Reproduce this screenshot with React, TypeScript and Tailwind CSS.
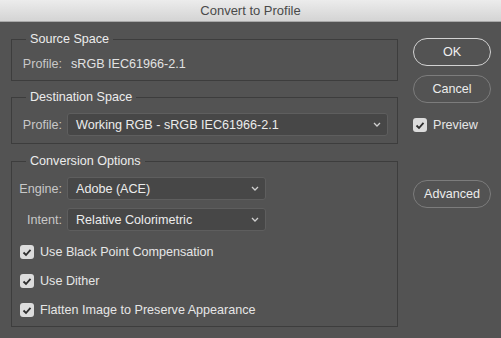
import React from "react";

const Chevron = () => (
  <svg width="8" height="5" viewBox="0 0 8 5" className="shrink-0">
    <polyline points="1,1 4,4 7,1" fill="none" stroke="#d0d0d0" strokeWidth="1.3" />
  </svg>
);

const Box = () => (
  <div className="w-[14px] h-[14px] rounded-[3px] bg-[#dcdcdc] flex items-center justify-center shrink-0">
    <svg width="10" height="9" viewBox="0 0 10 9">
      <polyline points="1.5,4.5 4,7 8.5,1.8" fill="none" stroke="#2e2e2e" strokeWidth="1.8" />
    </svg>
  </div>
);

const Check = ({ label }: { label: string }) => (
  <div className="flex items-center h-4">
    <Box />
    <span className="ml-[6px] text-[#e6e6e6]">{label}</span>
  </div>
);

const Select = ({ value, width }: { value: string; width: string }) => (
  <div
    className={`${width} h-[23px] flex items-center justify-between pl-[8px] pr-[6px] bg-[#474747] border border-[#5e5e5e] rounded-[3px] text-[#ececec]`}
  >
    <span>{value}</span>
    <Chevron />
  </div>
);

const Group = ({ title, children }: { title: string; children: React.ReactNode }) => (
  <fieldset className="border border-[#3d3d3d] pl-[6px] pr-[9px]">
    <legend className="ml-[8px] px-[4px] leading-4 text-[#ececec]">{title}</legend>
    {children}
  </fieldset>
);

export default function App() {
  return (
    <div
      className="w-[501px] h-[338px] bg-[#535353] text-[12.6px] leading-4 overflow-hidden"
      style={{ fontFamily: '"Liberation Sans", Arial, sans-serif' }}
    >
      {/* title bar */}
      <div className="h-[22px] bg-gradient-to-b from-[#ececec] to-[#d4d4d4] border-b border-[#a8a8a8] flex items-center justify-center text-[13px] text-[#4a4a4a]">
        Convert to Profile
      </div>

      <div className="flex pl-[11px] pt-[9px]">
        {/* left column */}
        <div className="w-[387px] flex flex-col gap-[8px]">
          <Group title="Source Space">
            <div className="flex items-center pt-[9px] pb-[8px]">
              <span className="w-[44px] text-right text-[#c8c8c8]">Profile:</span>
              <span className="ml-[9px] text-[#e2e2e2]">sRGB IEC61966-2.1</span>
            </div>
          </Group>

          <Group title="Destination Space">
            <div className="flex items-center pt-[8px] pb-[7px]">
              <span className="w-[44px] text-right text-[#c8c8c8]">Profile:</span>
              <div className="ml-[5px] flex-1">
                <Select value="Working RGB - sRGB IEC61966-2.1" width="w-full" />
              </div>
            </div>
          </Group>

          <div className="pt-[1px]">
            <Group title="Conversion Options">
              <div className="flex items-center pt-[8px]">
                <span className="w-[44px] text-right text-[#c8c8c8]">Engine:</span>
                <div className="ml-[5px]">
                  <Select value="Adobe (ACE)" width="w-[199px]" />
                </div>
              </div>
              <div className="flex items-center pt-[8px]">
                <span className="w-[44px] text-right text-[#c8c8c8]">Intent:</span>
                <div className="ml-[5px]">
                  <Select value="Relative Colorimetric" width="w-[199px]" />
                </div>
              </div>
              <div className="flex flex-col gap-[13px] pt-[13px] pb-[8px] pl-[2px]">
                <Check label="Use Black Point Compensation" />
                <Check label="Use Dither" />
                <Check label="Flatten Image to Preserve Appearance" />
              </div>
            </Group>
          </div>
        </div>

        {/* right column */}
        <div className="ml-[15px] w-[78px] flex flex-col pt-[7px]">
          <button className="h-[28px] rounded-full border border-[#d2d2d2] text-[#f0f0f0]">
            OK
          </button>
          <button className="mt-[9px] h-[28px] rounded-full border border-[#7c7c7c] text-[#ececec]">
            Cancel
          </button>
          <div className="mt-[14px] flex items-center">
            <Box />
            <span className="ml-[6px] text-[#e6e6e6]">Preview</span>
          </div>
          <button className="mt-[47px] h-[28px] rounded-full border border-[#7c7c7c] text-[#ececec]">
            Advanced
          </button>
        </div>
      </div>
    </div>
  );
}
